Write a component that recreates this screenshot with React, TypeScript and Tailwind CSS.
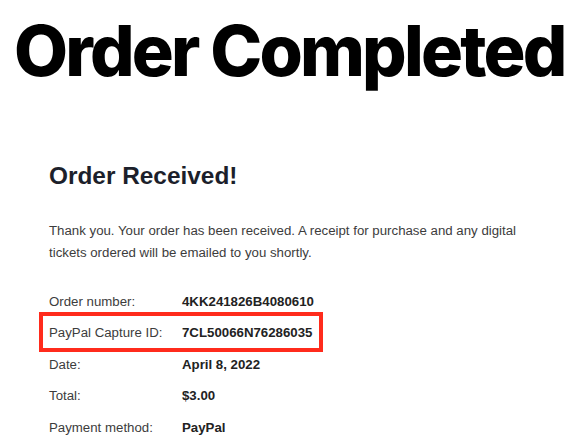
import React from "react";

const rows: [string, string][] = [
  ["Order number:", "4KK241826B4080610"],
  ["PayPal Capture ID:", "7CL50066N76286035"],
  ["Date:", "April 8, 2022"],
  ["Total:", "$3.00"],
  ["Payment method:", "PayPal"],
];

export default function App() {
  return (
    <div className="w-[586px] h-[446px] overflow-hidden bg-white font-['Liberation_Sans',Arial,sans-serif]">
      <h1 className="pt-[16px] pl-[14px] font-['Inter',sans-serif] text-[70px] leading-none font-extrabold text-black tracking-[-2.8px] whitespace-nowrap">
        Order Completed
      </h1>
      <div className="pl-[49px]">
        <h2 className="mt-[78px] text-[24.4px] leading-none font-bold text-[#1c1f2b]">
          Order Received!
        </h2>
        <p className="mt-[32px] text-[13.25px] leading-[21.6px] text-[#3c3c3c] w-[500px]">
          Thank you. Your order has been received. A receipt for purchase and any digital tickets ordered will be emailed to you shortly.
        </p>
        <div className="mt-[22px] flex flex-col">
          {rows.map(([label, value], i) => (
            <div key={label} className="relative flex text-[13.25px] leading-[31.6px]">
              {i === 1 && (
                <div className="absolute -left-[10px] -top-[5px] w-[284px] h-[40px] border-4 border-[#ff2b1c]" />
              )}
              <span className="w-[133px] text-[#3c3c3c]">{label}</span>
              <span className="font-bold text-[#222222]">{value}</span>
            </div>
          ))}
        </div>
      </div>
    </div>
  );
}
